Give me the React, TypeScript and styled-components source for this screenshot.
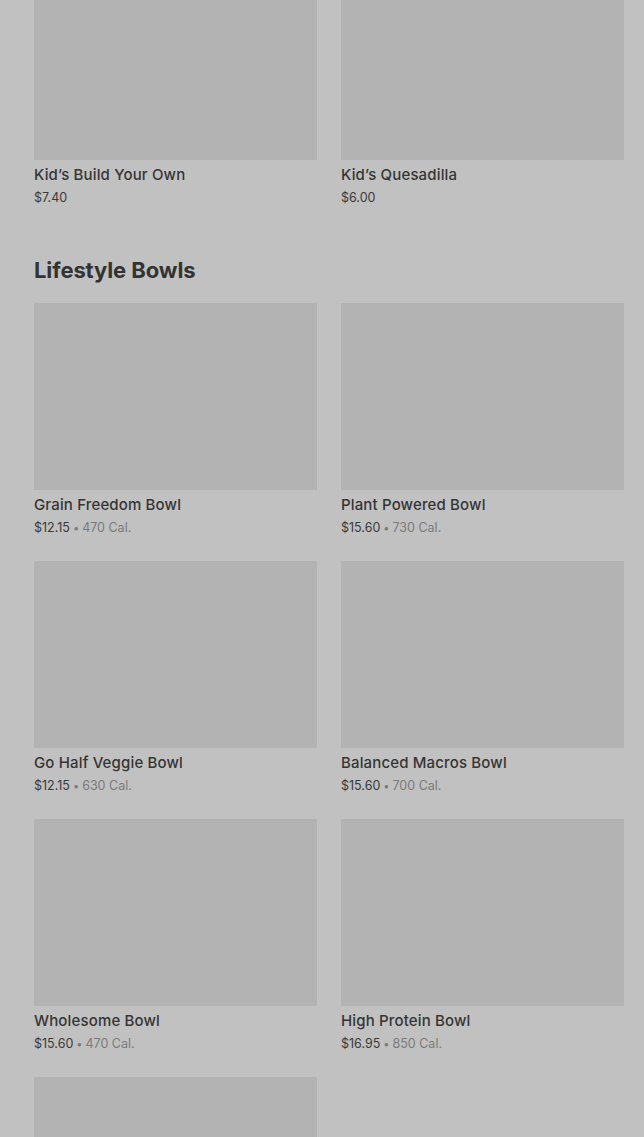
import React from 'react'
import styled, { createGlobalStyle } from 'styled-components'

interface IItem {
  name: string
  price: string
  cal?: string
}

const kids: IItem[] = [
  { name: 'Kid’s Build Your Own', price: '$7.40' },
  { name: 'Kid’s Quesadilla', price: '$6.00' }
]

const bowls: IItem[] = [
  { name: 'Grain Freedom Bowl', price: '$12.15', cal: '470 Cal.' },
  { name: 'Plant Powered Bowl', price: '$15.60', cal: '730 Cal.' },
  { name: 'Go Half Veggie Bowl', price: '$12.15', cal: '630 Cal.' },
  { name: 'Balanced Macros Bowl', price: '$15.60', cal: '700 Cal.' },
  { name: 'Wholesome Bowl', price: '$15.60', cal: '470 Cal.' },
  { name: 'High Protein Bowl', price: '$16.95', cal: '850 Cal.' },
  { name: '', price: '' }
]

const ItemCard: React.FC<{ item: IItem }> = ({ item }) => (
  <Card>
    <Thumb />
    {item.name && (
      <Info>
        <Name>{item.name}</Name>
        <Meta>
          {item.price}
          {item.cal && (
            <>
              <Dot>•</Dot>
              <Cal>{item.cal}</Cal>
            </>
          )}
        </Meta>
      </Info>
    )}
  </Card>
)

const App: React.FC = () => (
  <>
    <GlobalStyle />
    <Page>
      <Section>
        <Grid>
          {kids.map(item => (
            <ItemCard key={item.name} item={item} />
          ))}
        </Grid>
      </Section>
      <Section>
        <Heading>Lifestyle Bowls</Heading>
        <Grid>
          {bowls.map((item, i) => (
            <ItemCard key={i} item={item} />
          ))}
        </Grid>
      </Section>
    </Page>
  </>
)

const GlobalStyle = createGlobalStyle`
  html, body {
    margin: 0;
    height: 1137px;
    overflow: hidden;
    background: #c1c1c1;
  }
  body {
    font-family: Inter, "Noto Sans", sans-serif;
    color: #333;
  }
`

const Page = styled.div`
  margin-top: -27px;
  padding: 0 20px 0 34px;
  display: flex;
  flex-direction: column;
  gap: 49px;
`

const Section = styled.section`
  display: flex;
  flex-direction: column;
`

const Heading = styled.h2`
  margin: 0 0 19px;
  font-size: 22px;
  line-height: 28px;
  font-weight: 700;
  letter-spacing: -0.1px;
  color: #333;
`

const Grid = styled.div`
  display: grid;
  grid-template-columns: 283px 283px;
  column-gap: 24px;
  row-gap: 24px;
`

const Card = styled.div`
  display: flex;
  flex-direction: column;
`

const Thumb = styled.div`
  height: 187px;
  background: #b3b3b3;
`

const Info = styled.div`
  padding-top: 5px;
`

const Name = styled.div`
  font-size: 15px;
  line-height: 20px;
  font-weight: 500;
  letter-spacing: 0.15px;
  color: #353535;
`

const Meta = styled.div`
  margin-top: 4px;
  font-size: 12.5px;
  line-height: 18px;
  color: #3a3a3a;
`

const Dot = styled.span`
  margin: 0 3px;
  color: #7a7a7a;
  font-size: 11px;
`

const Cal = styled.span`
  color: #7a7a7a;
`

export default App
